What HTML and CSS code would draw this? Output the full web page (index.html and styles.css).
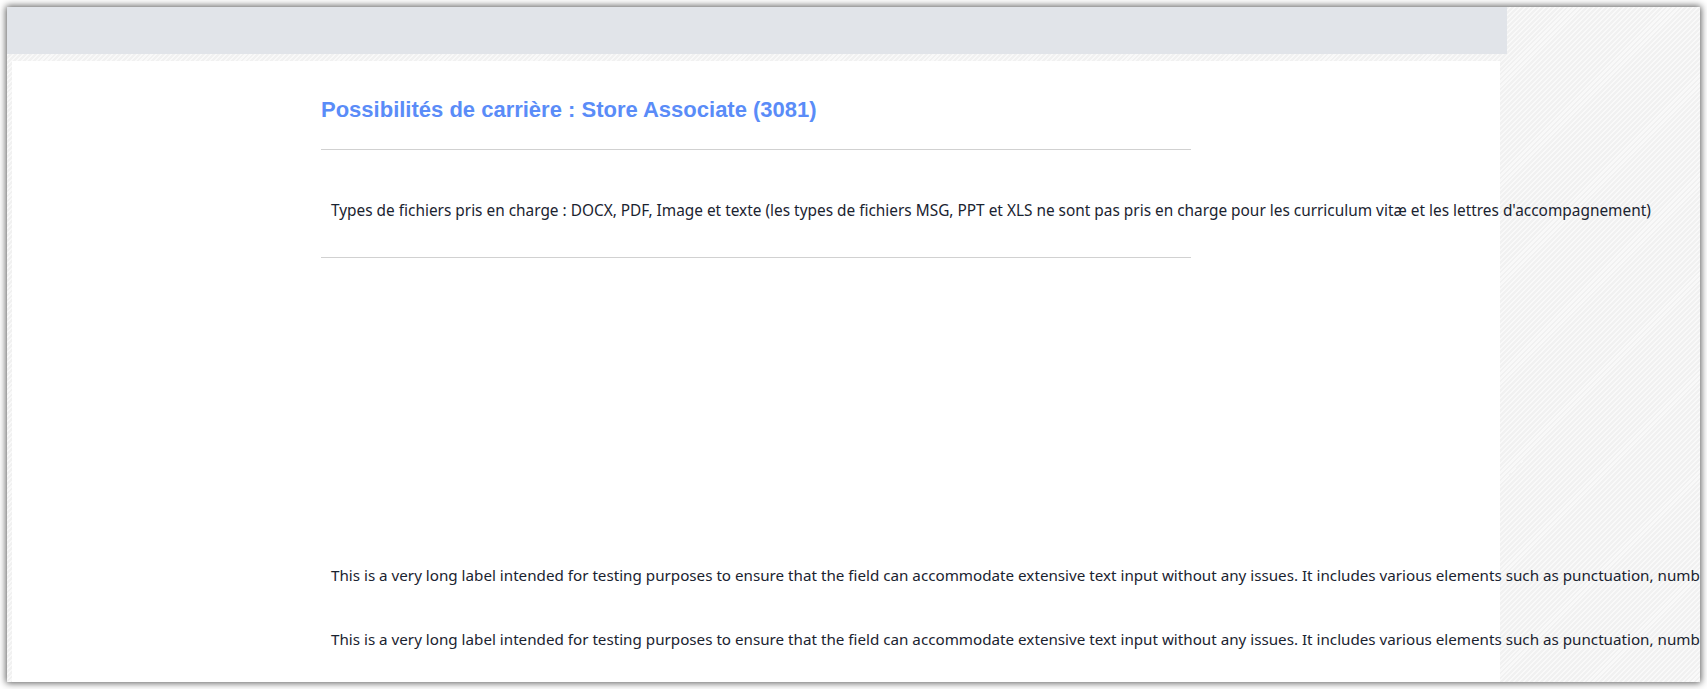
FILE: index.html
```html
<!DOCTYPE html>
<html lang="fr">
<head>
  <meta charset="UTF-8" />
  <meta name="viewport" content="width=device-width, initial-scale=1.0"/>
  <title>Possibilités de carrière</title>
  <link rel="stylesheet" href="styles.css">
</head>
<body>

  <!-- Window frame -->
  <div class="frame">
    <div class="shell">

      <!-- Top bar -->
      <header class="topbar"></header>

      <!-- Page content -->
      <main class="page">
        <section class="apply-column">
          <h1 class="page-title">Possibilités de carrière : Store Associate (3081)</h1>

          <div class="file-note">
            Types de fichiers pris en charge : DOCX, PDF, Image et texte (les types de fichiers MSG, PPT et XLS ne sont pas pris en charge pour les curriculum vitæ et les lettres d'accompagnement)
          </div>

          <div class="form-fields">
            <div class="field-label">This is a very long label intended for testing purposes to ensure that the field can accommodate extensive text input without any issues. It includes various elements such as punctuation, numbers, and special characters to verify the display.</div>
            <div class="field-label">This is a very long label intended for testing purposes to ensure that the field can accommodate extensive text input without any issues. It includes various elements such as punctuation, numbers, and special characters to verify the display.</div>
          </div>
        </section>
      </main>

    </div>
  </div>

</body>
</html>
```

FILE: styles.css
```css
body {
  margin: 0;
  background: #ffffff;
  font-family: "Noto Sans", "Open Sans", sans-serif;
  color: #1a2330;
}

.frame {
  margin: 7px;
  width: 1693px;
  height: 675px;
  overflow: hidden;
  box-shadow: 0 0 7px 1px rgba(0, 0, 0, 0.65);
  background: repeating-linear-gradient(135deg, #f1f1f1 0 2px, #f9f9f9 2px 3.5px);
}

.shell {
  width: 1500px;
  height: 100%;
  display: flex;
  flex-direction: column;
}

.topbar {
  height: 47px;
  flex-shrink: 0;
  background-color: #e1e4e9;
}

.page {
  flex: 1;
  margin: 7px 0 0 5px;
  width: 1488px;
  background-color: white;
}

.apply-column {
  width: 870px;
  margin: 0 auto;
  padding-top: 36px;
}

.page-title {
  margin: 0;
  font-family: "Liberation Sans", Arial, sans-serif;
  font-size: 22px;
  line-height: 26px;
  font-weight: bold;
  color: #5a8cf8;
  padding-bottom: 26px;
  border-bottom: 1px solid #d1d1d1;
}

.file-note {
  padding: 51px 10px 36px;
  font-size: 15.4px;
  line-height: 20px;
  white-space: nowrap;
  border-bottom: 1px solid #d1d1d1;
}

.form-fields {
  padding-top: 307px;
  display: flex;
  flex-direction: column;
  gap: 44px;
}

.field-label {
  padding-left: 10px;
  font-size: 15.2px;
  line-height: 20px;
  white-space: nowrap;
}
```
